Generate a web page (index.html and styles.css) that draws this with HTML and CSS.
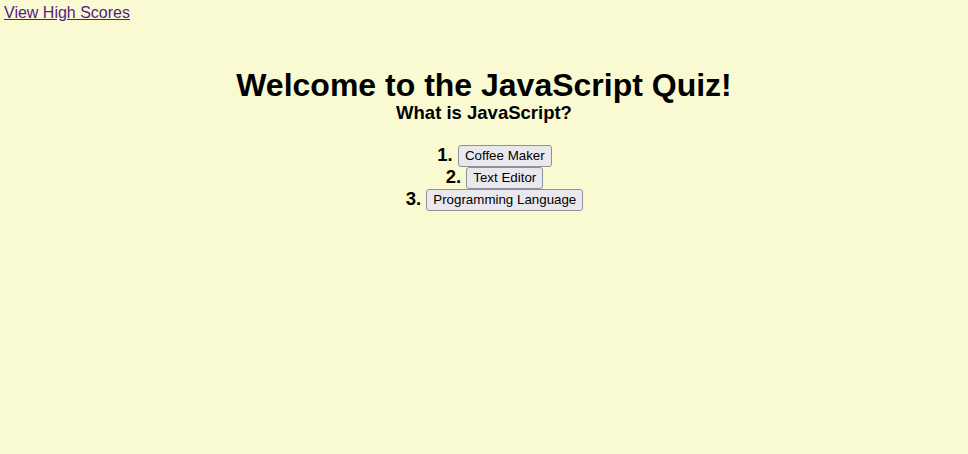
FILE: index.html
```html
<!DOCTYPE html>
<html lang="en">
<head>
<meta charset="utf-8">
<title>JavaScript Quiz</title>
<link rel="stylesheet" href="styles.css">
</head>
<body>
<header class="top">
  <a class="scores-link" href="#scores">View High Scores</a>
</header>
<main class="quiz">
  <h1 class="title">Welcome to the JavaScript Quiz!</h1>
  <h2 class="question">What is JavaScript?</h2>
  <ol class="answers">
    <li class="answer"><button class="answer-btn">Coffee Maker</button></li>
    <li class="answer"><button class="answer-btn">Text Editor</button></li>
    <li class="answer"><button class="answer-btn">Programming Language</button></li>
  </ol>
</main>
</body>
</html>
```
FILE: styles.css
```css
html, body {
  margin: 0;
  padding: 0;
}
body {
  background: #fafad2;
  font-family: "Liberation Sans", Arial, Helvetica, sans-serif;
  color: #000;
  min-height: 454px;
}
.top {
  padding: 3px 4px 0;
  font-size: 16px;
  line-height: 19px;
}
.scores-link {
  color: #551a8b;
  text-decoration: underline;
}
.quiz {
  text-align: center;
  padding-top: 46px;
}
.title {
  margin: 0;
  font-size: 32px;
  line-height: 34px;
  font-weight: bold;
}
.question {
  margin: 0;
  font-size: 18.5px;
  line-height: 22px;
  font-weight: bold;
}
.answers {
  list-style: decimal inside;
  margin: 20px 0 0;
  padding: 0 0 0 21px;
}
.answer {
  font-size: 18.5px;
  font-weight: bold;
  line-height: 22px;
  height: 22px;
}
.answer::marker {
  font-weight: bold;
}
.answer-btn {
  font-family: "Liberation Sans", Arial, Helvetica, sans-serif;
  font-size: 13.33px;
  font-weight: normal;
  color: #000;
  background: #e9e9ed;
  border: 1px solid #8f8f9d;
  border-radius: 3px;
  padding: 2px 6px 3px;
  line-height: 15px;
  vertical-align: 1px;
}
```
